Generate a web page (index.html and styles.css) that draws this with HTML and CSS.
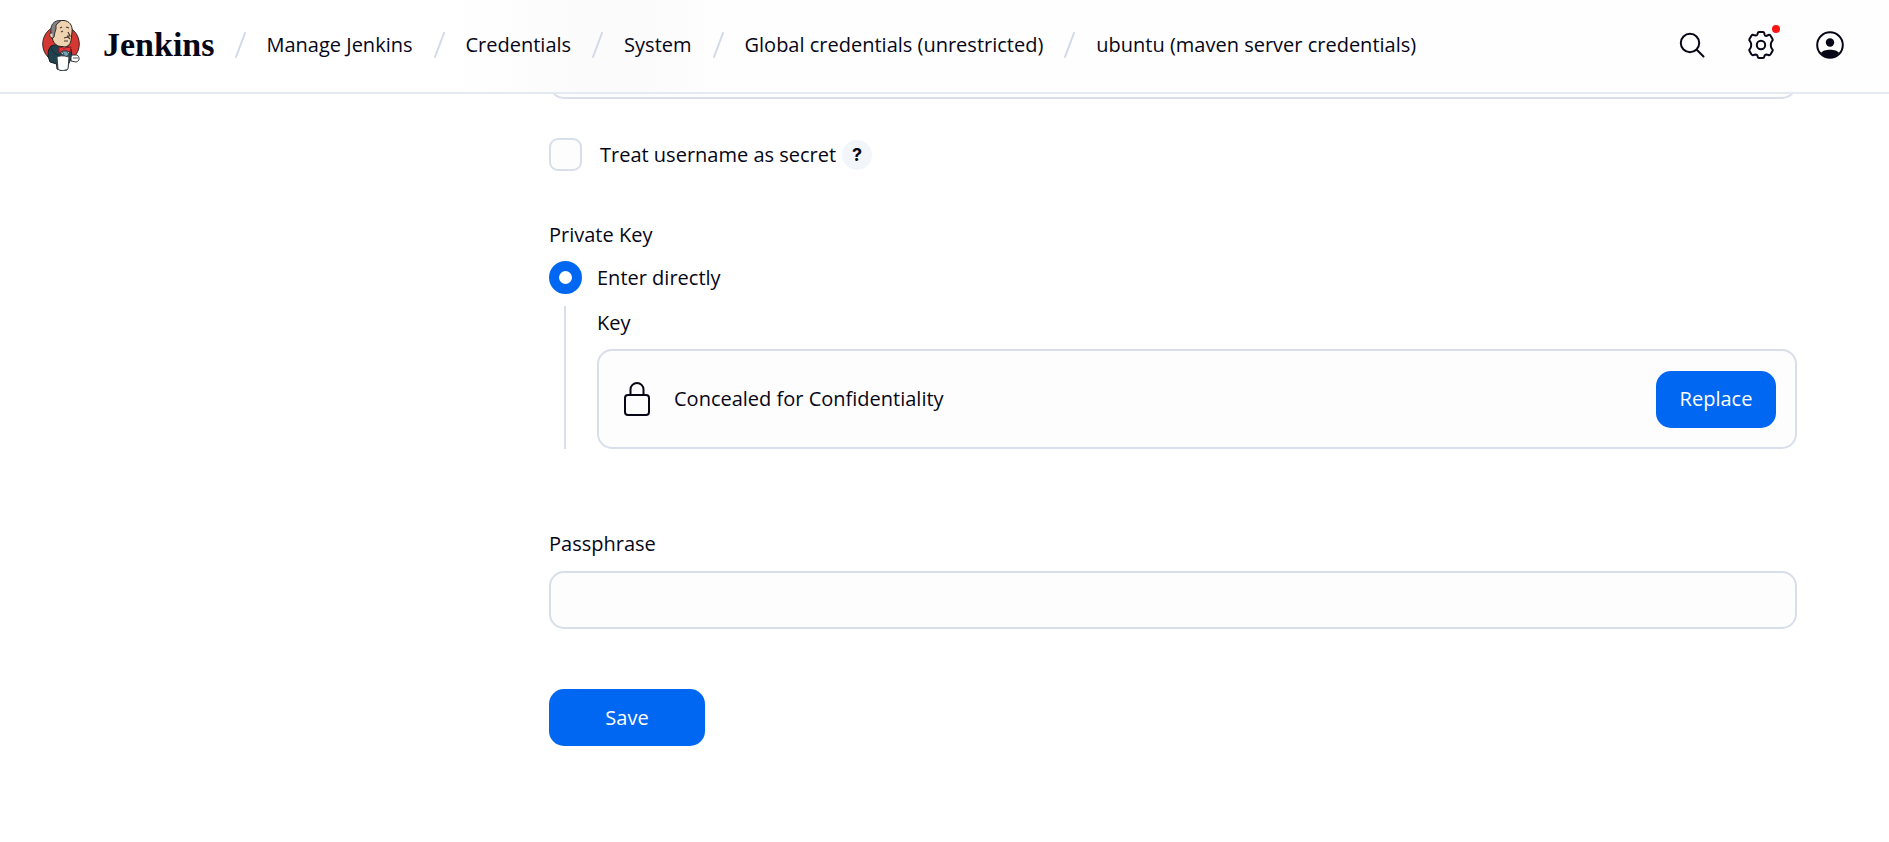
FILE: index.html
```html
<!DOCTYPE html>
<html lang="en">
<head>
<meta charset="utf-8">
<title>ubuntu (maven server credentials) - Jenkins</title>
<link rel="stylesheet" href="styles.css">
</head>
<body>
<header class="header">
  <a class="brand" href="#">
    <svg class="brand-logo" viewBox="0 0 38 52" aria-hidden="true">
      <ellipse cx="19" cy="25" rx="18.300" ry="18.500" fill="#d33833" stroke="#3b2524" stroke-width="1"/>
      <path d="M9 27 6.500 31 6 37 8 43 14.500 45 15 50 19 51.500 25 51 27 44 30 38 29 30 23 26 16 25Z" fill="#20414e" stroke="#161f24" stroke-width="1"/>
      <path d="M8.500 27C11 35 15 37 24 37" fill="none" stroke="#162b35" stroke-width="1"/>
      <path d="M10.500 11C10 17 9 23 16 27L23 28C28 27 29 23 29.500 18L30 13C31 6 27 2 22 1.500 16 1 12 4 10.500 11Z" fill="#efd3b0" stroke="#292322" stroke-width="1"/>
      <path d="M19 1.500C12 1 8 6 9 13L8 16 10 20 12 18 13 13 14 10 14 6Z" fill="#858286" stroke="#373338" stroke-width="1"/>
      <path d="M10 14C6.500 13 7 19 11 19" fill="#efd3b0" stroke="#393031"/>
      <path d="M18 9 20 8M24 8 27 9M21 12 19 13M26 13 28 17 25 17M22 19 26 18 28 20M22 22 26 22" fill="none" stroke="#4c3933" stroke-width="1.200"/>
      <path d="M18 28 20 35 26 37 28 29Z" fill="#f5f5f4"/>
      <path d="M17 28 17 34 22 31 28 33 29 28 22 29Z" fill="#ed333b" stroke="#8a191d" stroke-width="1"/>
      <path d="M20 32 25 32 27 36 23 38Z" fill="#78a2b8" stroke="#27424d"/>
      <path d="M15 38C19 36 23 37 27 38L26 50C22 52 18 52 16 50Z" fill="#fff" stroke="#3b4145" stroke-width="1"/>
      <path d="M29 38 30 36 35 36C38 38 38 42 34 43L29 42Z" fill="#fff" stroke="#303539" stroke-width="1"/>
      <path d="M31 39 36 39" stroke="#55595c"/>
    </svg>
    <span class="brand-name">Jenkins</span>
  </a>
  <nav class="crumbs" aria-label="Breadcrumb">
    <svg class="slash" viewBox="0 0 11 26" aria-hidden="true"><path d="M10 1 1 25"/></svg>
    <a href="#">Manage Jenkins</a>
    <svg class="slash" viewBox="0 0 11 26" aria-hidden="true"><path d="M10 1 1 25"/></svg>
    <a href="#">Credentials</a>
    <svg class="slash" viewBox="0 0 11 26" aria-hidden="true"><path d="M10 1 1 25"/></svg>
    <a href="#">System</a>
    <svg class="slash" viewBox="0 0 11 26" aria-hidden="true"><path d="M10 1 1 25"/></svg>
    <a href="#">Global credentials (unrestricted)</a>
    <svg class="slash" viewBox="0 0 11 26" aria-hidden="true"><path d="M10 1 1 25"/></svg>
    <a href="#">ubuntu (maven server credentials)</a>
  </nav>
  <div class="actions">
    <button class="icon-button" type="button" aria-label="Search">
      <svg viewBox="0 0 28 28" aria-hidden="true"><circle cx="12" cy="12" r="9.200"/><path d="M18.700 18.700 25.500 25.500"/></svg>
    </button>
    <button class="icon-button" type="button" aria-label="Manage Jenkins">
      <svg viewBox="0 0 28 28" aria-hidden="true"><path d="M12 1H16Q17 1 17.300 2.300L17.600 3.700Q18 5 19.200 5L21.500 4Q22.800 3.500 23.600 4.700L25.500 8Q26.200 9.200 25.200 10L24.500 11Q23.800 12 23.800 14T24.500 17L25.200 18Q26.200 18.800 25.500 20L23.600 23.300Q22.800 24.500 21.500 24L19.200 23.500Q18 23.500 17.600 24.500L17.300 25.700Q17 27 16 27H12Q11 27 10.700 25.700L10.400 24.500Q10 23.500 8.800 23.500L6.500 24Q5.200 24.500 4.400 23.300L2.500 20Q1.800 18.800 2.800 18L3.500 17Q4.200 16 4.200 14T3.500 11L2.800 10Q1.800 9.200 2.500 8L4.400 4.700Q5.200 3.500 6.500 4L8.800 4.500Q10 4.500 10.400 3.500L10.700 2.300Q11 1 12 1Z"/><circle cx="14" cy="14" r="4.200"/></svg>
      <span class="alert-dot"></span>
    </button>
    <button class="icon-button" type="button" aria-label="User">
      <svg viewBox="0 0 28 28" aria-hidden="true"><circle cx="14" cy="14" r="12.800"/><circle class="solid" cx="14" cy="11.500" r="4.200"/><path class="solid" d="M5 22C7 17.500 21 17.500 23 22 18 28 10 28 5 22Z"/></svg>
    </button>
  </div>
</header>
<main class="main">
  <form class="form">
    <input class="text-input" type="text" aria-label="Username">
    <div class="check-row">
      <input class="checkbox" type="checkbox" id="secret">
      <label for="secret">Treat username as secret</label>
      <button class="help" type="button" aria-label="Help for Treat username as secret">?</button>
    </div>
    <fieldset class="group">
      <legend class="label">Private Key</legend>
      <div class="radio-row">
        <input class="radio" type="radio" id="direct" name="source" checked>
        <label for="direct">Enter directly</label>
      </div>
      <div class="nested">
        <div class="label">Key</div>
        <div class="secret">
          <svg class="lock" viewBox="0 0 26 34" aria-hidden="true"><rect x="1" y="13" width="24" height="20" rx="3"/><path d="M6.500 13V7.500a6.500 6.500 0 0 1 13 0V13"/></svg>
          <span class="secret-text">Concealed for Confidentiality</span>
          <button class="button" type="button">Replace</button>
        </div>
      </div>
    </fieldset>
    <div class="field">
      <label class="label" for="passphrase">Passphrase</label>
      <input class="text-input" type="password" id="passphrase">
    </div>
    <button class="button save" type="button">Save</button>
  </form>
</main>
</body>
</html>
```

FILE: styles.css
```css
* {
  box-sizing: border-box;
}

body {
  margin: 0;
  background: #fff;
  color: #060616;
  font: 20px/30px "Open Sans", "Noto Sans", sans-serif;
}

button,
input {
  margin: 0;
  font: inherit;
  color: inherit;
}

a {
  color: inherit;
  text-decoration: none;
}

.header {
  position: fixed;
  inset: 0 0 auto;
  z-index: 1;
  display: flex;
  align-items: center;
  gap: 20px;
  height: 94px;
  padding: 0 45px 2px 42px;
  border-bottom: 2px solid #e5e9f0;
  background: linear-gradient(90deg, #fff 24%, #fbfbfb 31%, #fbfbfb 34%, #fefefe 38%);
}

.brand {
  display: flex;
  align-items: center;
  gap: 23px;
}

.brand-logo {
  width: 38px;
  height: 52px;
}

.brand-name {
  font: bold 34px/40px "Liberation Serif", serif;
}

.crumbs {
  display: flex;
  flex: 1;
  align-items: center;
  gap: 21px;
  white-space: nowrap;
}

.slash {
  flex: none;
  width: 11px;
  height: 26px;
  fill: none;
  stroke: #d0daea;
  stroke-width: 2;
  stroke-linecap: round;
}

.actions {
  display: flex;
  gap: 41px;
}

.icon-button {
  position: relative;
  width: 28px;
  height: 28px;
  padding: 0;
  border: 0;
  background: none;
}

.icon-button svg {
  display: block;
  fill: none;
  stroke: #060616;
  stroke-width: 2;
  stroke-linecap: round;
}

.icon-button .solid {
  fill: #060616;
  stroke: none;
}

.alert-dot {
  position: absolute;
  top: -6px;
  right: -5px;
  width: 8px;
  height: 8px;
  border-radius: 50%;
  background: #fb1414;
}

.main {
  padding: 41px 92px 0 549px;
}

.form {
  display: flex;
  flex-direction: column;
}

.text-input {
  display: block;
  width: 100%;
  height: 58px;
  padding: 0 16px;
  border: 2px solid #d8deea;
  border-radius: 15px;
  background: #fdfdfd;
}

.check-row {
  display: flex;
  align-items: center;
  margin-top: 39px;
}

.checkbox,
.radio {
  flex: none;
  appearance: none;
  width: 33px;
  height: 33px;
  margin-right: 15px;
}

.checkbox {
  margin-right: 18px;
  border: 2px solid #d8deea;
  border-radius: 9px;
  background: #fdfdfd;
}

.help {
  width: 30px;
  height: 30px;
  margin-left: 6px;
  padding: 0;
  border: 0;
  border-radius: 50%;
  background: #f2f5f9;
  font: bold 18px/30px Inter, sans-serif;
}

.group {
  min-width: 0;
  margin: 49px 0 0;
  padding: 0;
  border: 0;
}

.label {
  display: block;
  padding: 0;
}

.radio-row {
  display: flex;
  align-items: center;
  margin-top: 11px;
}

.radio {
  border: 10px solid #0067f2;
  border-radius: 50%;
  background: #fff;
}

.nested {
  margin: 12px 0 0 15px;
  padding: 2px 0 0 31px;
  border-left: 2px solid #d8deea;
}

.secret {
  display: flex;
  align-items: center;
  min-height: 100px;
  margin-top: 11px;
  padding: 0 19px 0 25px;
  border: 2px solid #d8deea;
  border-radius: 15px;
  background: #fdfdfd;
}

.lock {
  width: 26px;
  height: 34px;
  fill: none;
  stroke: #060616;
  stroke-width: 2;
}

.secret-text {
  flex: 1;
  margin-left: 24px;
}

.button {
  min-width: 120px;
  height: 57px;
  padding: 0 23px;
  border: 0;
  border-radius: 15px;
  background: #0067f2;
  color: #fff;
}

.field {
  display: flex;
  flex-direction: column;
  gap: 12px;
  margin-top: 80px;
}

.save {
  align-self: flex-start;
  min-width: 156px;
  margin-top: 60px;
}
```
